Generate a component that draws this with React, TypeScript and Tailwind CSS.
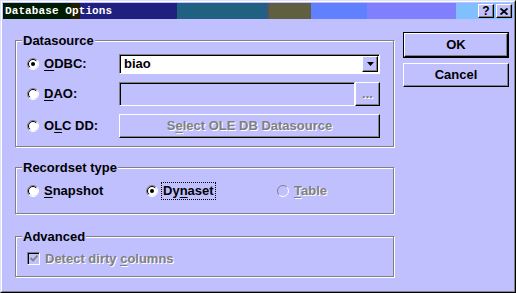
import React from 'react';

// Win95-style "Database Options" dialog with a lavender colour scheme.

const raised = 'border border-t-white border-l-white border-b-black border-r-black shadow-[inset_-1px_-1px_0_#808080]';
const sunken = 'border border-t-[#808080] border-l-[#808080] border-b-white border-r-white shadow-[inset_1px_1px_0_#000]';
const disabledText = 'text-[#808080] [text-shadow:1px_1px_0_#fff]';

function Radio({ checked = false, disabled = false }: { checked?: boolean; disabled?: boolean }) {
  return (
    <svg width="12" height="12" viewBox="0 0 12 12" className="shrink-0">
      <circle cx="6" cy="6" r="5" fill={disabled ? '#c0c0ff' : '#fff'} />
      <path d="M9.9 2.1 A5.5 5.5 0 0 0 2.1 9.9" stroke="#808080" fill="none" />
      <path d="M2.1 9.9 A5.5 5.5 0 0 0 9.9 2.1" stroke="#fff" fill="none" />
      {!disabled && <path d="M9.2 2.8 A4.5 4.5 0 0 0 2.8 9.2" stroke="#000" fill="none" />}
      {checked && <circle cx="6" cy="6" r="2" fill="#000" />}
    </svg>
  );
}

function GroupBox({ label, className, children }: { label: string; className: string; children: React.ReactNode }) {
  return (
    <div className={`relative w-[379px] border border-[#808080] shadow-[1px_1px_0_#fff,inset_1px_1px_0_#fff] ${className}`}>
      <span className="absolute left-[6px] -top-[8px] bg-[#c0c0ff] px-[1px] leading-[15px] text-black">{label}</span>
      {children}
    </div>
  );
}

export default function App() {
  return (
    <div className="w-[516px] h-[293px] bg-[#c0c0ff] border border-t-[#e0e0ff] border-l-[#e0e0ff] border-b-black border-r-black font-['Liberation_Sans',Arial,sans-serif] font-bold text-[13px] text-black select-none">
      <div className="w-full h-full border border-t-white border-l-white border-b-[#808080] border-r-[#808080] p-px flex flex-col">
        {/* Title bar */}
        <div className="h-[16px] flex items-center bg-[linear-gradient(90deg,#001c00_0_68px,#201c00_68px_77px,#20207f_77px_174px,#206080_174px_264px,#505070_264px_266px,#606040_266px_308px,#6080ff_308px_364px,#8080ff_364px_453px,#80c0ff_453px)]">
          <span className="pl-[2px] font-['Liberation_Mono',monospace] text-[11px] tracking-[0.1px] font-bold text-white leading-none">Database Options</span>
          <div className="ml-auto mr-[1px] flex gap-[2px]">
            <div className={`w-[16px] h-[14px] bg-[#c0c0ff] flex items-center justify-center text-[12px] leading-none font-black ${raised}`}>?</div>
            <div className={`w-[16px] h-[14px] bg-[#c0c0ff] flex items-center justify-center ${raised}`}>
              <svg width="8" height="7" viewBox="0 0 8 7">
                <path d="M0.5 0.5 L7.5 6.5 M7.5 0.5 L0.5 6.5" stroke="#000" strokeWidth="1.8" />
              </svg>
            </div>
          </div>
        </div>

        <div className="flex pl-[12px]">
          {/* Left column: group boxes */}
          <div className="flex flex-col w-[380px]">
            <GroupBox label="Datasource" className="mt-[21px]">
              <div className="flex flex-col gap-[8px] pt-[13px] pb-[8px] pl-[11px]">
                <div className="h-[20px] flex items-center">
                  <div className="w-[92px] flex items-center gap-[5px]">
                    <Radio checked />
                    <span><u className="underline-offset-2">O</u>DBC:</span>
                  </div>
                  <div className={`w-[261px] h-[20px] bg-white flex items-center ${sunken}`}>
                    <span className="pl-[4px] flex-1">biao</span>
                    <div className={`w-[16px] h-[16px] mr-px bg-[#c0c0ff] flex items-center justify-center ${raised}`}>
                      <svg width="7" height="4" viewBox="0 0 7 4">
                        <path d="M0 0 H7 L3.5 4 Z" fill="#000" />
                      </svg>
                    </div>
                  </div>
                </div>
                <div className="h-[24px] flex items-center">
                  <div className="w-[92px] flex items-center gap-[5px]">
                    <Radio />
                    <span><u className="underline-offset-2">D</u>AO:</span>
                  </div>
                  <div className={`w-[236px] h-[24px] bg-[#c0c0ff] ${sunken}`} />
                  <div className={`w-[25px] h-[24px] bg-[#c0c0ff] flex items-end justify-center pb-[5px] leading-none ${raised} ${disabledText}`}>...</div>
                </div>
                <div className="h-[24px] flex items-center">
                  <div className="w-[92px] flex items-center gap-[5px]">
                    <Radio />
                    <span>O<u className="underline-offset-2">L</u>C DD:</span>
                  </div>
                  <div className={`w-[261px] h-[24px] bg-[#c0c0ff] flex items-center justify-center ${raised} ${disabledText}`}>
                    <span>S<u className="underline-offset-2">e</u>lect OLE DB Datasource</span>
                  </div>
                </div>
              </div>
            </GroupBox>

            <GroupBox label="Recordset type" className="mt-[20px] h-[47px]">
              <div className="h-full flex items-center pl-[11px]">
                <div className="w-[119px] flex items-center gap-[5px]">
                  <Radio />
                  <span><u className="underline-offset-2">S</u>napshot</span>
                </div>
                <div className="w-[131px] flex items-center gap-[4px]">
                  <Radio checked />
                  <span className="outline-1 outline-dotted outline-black px-px leading-[16px]">Dy<u className="underline-offset-2">n</u>aset</span>
                </div>
                <div className="flex items-center gap-[5px]">
                  <Radio disabled />
                  <span className={disabledText}><u className="underline-offset-2">T</u>able</span>
                </div>
              </div>
            </GroupBox>

            <GroupBox label="Advanced" className="mt-[22px] h-[41px]">
              <div className="flex items-center gap-[5px] pl-[11px] pt-[12px]">
                <div className={`w-[13px] h-[13px] bg-[#c0c0ff] flex items-center justify-center ${sunken}`}>
                  <svg width="8" height="7" viewBox="0 0 8 7">
                    <path d="M0.5 3 L3 5.5 L7.5 0.5" stroke="#808080" strokeWidth="1.8" fill="none" />
                  </svg>
                </div>
                <span className={disabledText}>Detect dirty <u className="underline-offset-2">c</u>olumns</span>
              </div>
            </GroupBox>
          </div>

          {/* Right column: buttons */}
          <div className="ml-[8px] mt-[13px] flex flex-col gap-[5px]">
            <div className="w-[106px] h-[26px] border border-black">
              <div className={`w-full h-full flex items-center justify-center ${raised}`}>OK</div>
            </div>
            <div className={`w-[106px] h-[24px] flex items-center justify-center ${raised}`}>Cancel</div>
          </div>
        </div>
      </div>
    </div>
  );
}
